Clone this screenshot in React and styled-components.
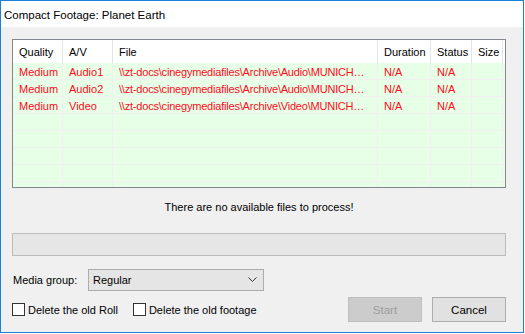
import React from "react";
import styled, { createGlobalStyle } from "styled-components";

const Global = createGlobalStyle`
  html, body { margin: 0; padding: 0; background: #ffffff; }
  body { font-family: "Liberation Sans", Arial, sans-serif; font-size: 11px; color: #000; }
  * { box-sizing: border-box; }
`;

const Window = styled.div`
  width: 524px;
  height: 333px;
  border: 1px solid #1c80d5;
  display: flex;
  flex-direction: column;
  background: #f0f0f0;
`;

const TitleBar = styled.div`
  height: 26px;
  background: #ffffff;
  display: flex;
  align-items: center;
  padding: 1px 0 0 3px;
  font-size: 11.5px;
  color: #000;
`;

const Body = styled.div`
  flex: 1;
  display: flex;
  flex-direction: column;
  padding: 12px 17px 0 11px;
`;

const Table = styled.div`
  height: 149px;
  border: 1px solid #828790;
  background: #e6ffe6;
  overflow: hidden;
`;

const cols = "50px 50px 265px 53px 41px 31px 1fr";

const HeaderRow = styled.div`
  display: grid;
  grid-template-columns: ${cols};
  height: 23px;
  background: #ffffff;
`;

const HeaderCell = styled.div`
  display: flex;
  align-items: center;
  padding-left: 6px;
  border-right: 1px solid ${(p) => (p.$last ? "transparent" : "#e5e5e5")};
  white-space: nowrap;
  overflow: hidden;
`;

const Row = styled.div`
  display: grid;
  grid-template-columns: ${cols};
  height: 17px;
  border-bottom: 1px solid #f0f0f0;
`;

const Cell = styled.div`
  display: flex;
  align-items: center;
  padding: 1px 0 0 6px;
  border-right: 1px solid #f0f0f0;
  color: #ff0a1e;
  white-space: nowrap;
  overflow: hidden;
  min-width: 0;
  letter-spacing: ${(p) => p.$ls || 0}px;
`;

const Message = styled.div`
  text-align: center;
  height: 16px;
  line-height: 16px;
  margin-top: 11px;
`;

const Progress = styled.div`
  margin-top: 18px;
  height: 23px;
  border: 1px solid #bcbcbc;
  background: #e6e6e6;
`;

const MediaRow = styled.div`
  margin-top: 13px;
  display: flex;
  align-items: center;
  height: 22px;
`;

const Label = styled.span`
  width: 76px;
  padding-left: 1px;
`;

const Combo = styled.div`
  width: 176px;
  height: 22px;
  border: 1px solid #adadad;
  background: #e5e5e5;
  display: flex;
  align-items: center;
  justify-content: space-between;
  padding: 0 6px 0 4px;
`;

const BottomRow = styled.div`
  margin-top: 6px;
  display: flex;
  align-items: center;
  height: 25px;
`;

const Check = styled.label`
  display: flex;
  align-items: center;
  gap: 3px;
  margin-right: ${(p) => p.$gap || 0}px;
`;

const Box = styled.span`
  width: 13px;
  height: 13px;
  border: 1px solid #333333;
  background: #ffffff;
  display: inline-block;
`;

const Spacer = styled.div`
  flex: 1;
`;

const Button = styled.button`
  width: 74px;
  height: 25px;
  font: inherit;
  font-size: 11.5px;
  margin-left: ${(p) => p.$ml || 0}px;
  border: 1px solid ${(p) => (p.disabled ? "#bfbfbf" : "#adadad")};
  background: ${(p) => (p.disabled ? "#cccccc" : "#e1e1e1")};
  color: ${(p) => (p.disabled ? "#9d9d9d" : "#000")};
  padding: 0;
`;

const rows = [
  ["Medium", "Audio1", "\\\\zt-docs\\cinegymediafiles\\Archive\\Audio\\MUNICH\u2026"],
  ["Medium", "Audio2", "\\\\zt-docs\\cinegymediafiles\\Archive\\Audio\\MUNICH\u2026"],
  ["Medium", "Video", "\\\\zt-docs\\cinegymediafiles\\Archive\\Video\\MUNICH\u2026"],
];

const headers = ["Quality", "A/V", "File", "Duration", "Status", "Size", ""];

export default function App() {
  const empties = Array.from({ length: 5 });
  return (
    <>
      <Global />
      <Window>
        <TitleBar>Compact Footage: Planet Earth</TitleBar>
        <Body>
          <Table>
            <HeaderRow>
              {headers.map((h, i) => (
                <HeaderCell key={i} $last={i === headers.length - 1}>{h}</HeaderCell>
              ))}
            </HeaderRow>
            {rows.map((r, i) => (
              <Row key={i}>
                <Cell>{r[0]}</Cell>
                <Cell>{r[1]}</Cell>
                <Cell $ls={-0.2}>{r[2]}</Cell>
                <Cell>N/A</Cell>
                <Cell>N/A</Cell>
                <Cell />
                <Cell />
              </Row>
            ))}
            {empties.map((_, i) => (
              <Row key={"e" + i}>
                <Cell /><Cell /><Cell /><Cell /><Cell /><Cell /><Cell />
              </Row>
            ))}
          </Table>
          <Message>There are no available files to process!</Message>
          <Progress />
          <MediaRow>
            <Label>Media group:</Label>
            <Combo>
              <span>Regular</span>
              <svg width="9" height="6" viewBox="0 0 9 6">
                <path d="M0.5 0.5 L4.5 4.5 L8.5 0.5" fill="none" stroke="#333" strokeWidth="1" />
              </svg>
            </Combo>
          </MediaRow>
          <BottomRow>
            <Check $gap={15}><Box />Delete the old Roll</Check>
            <Check><Box />Delete the old footage</Check>
            <Spacer />
            <Button disabled>Start</Button>
            <Button $ml={10}>Cancel</Button>
          </BottomRow>
        </Body>
      </Window>
    </>
  );
}
